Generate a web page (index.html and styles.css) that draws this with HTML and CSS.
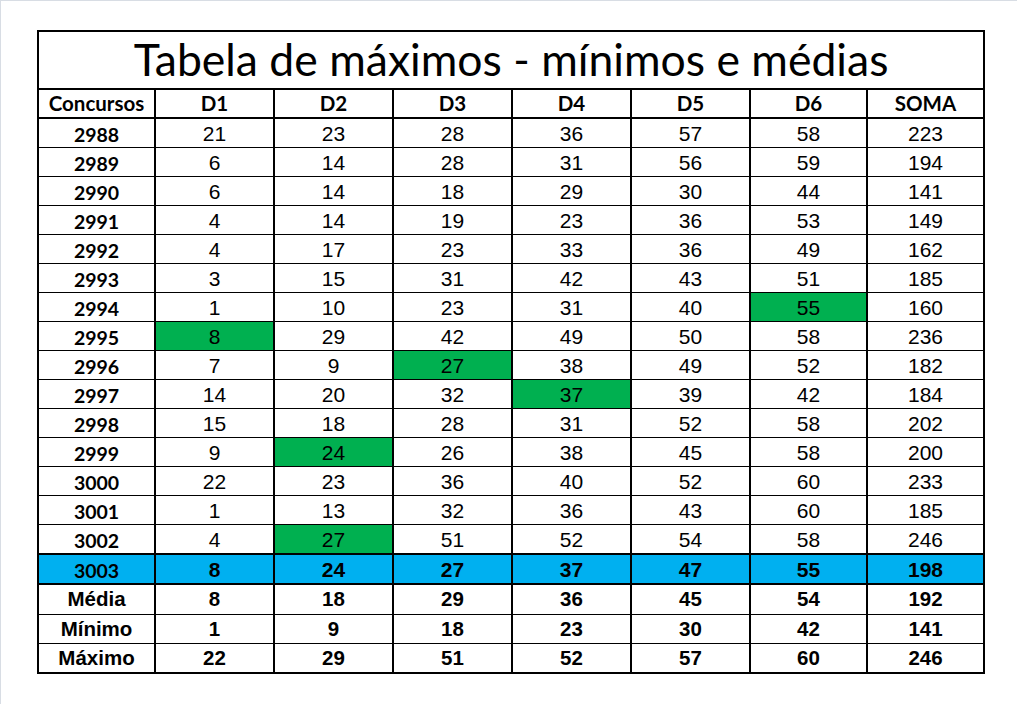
FILE: index.html
```html
<!DOCTYPE html>
<html lang="pt">
<head>
<meta charset="utf-8">
<title>Tabela de máximos - mínimos e médias</title>
<link rel="stylesheet" href="styles.css">
</head>
<body>
<div class="page">
<table class="sheet">
  <colgroup>
    <col class="c-lab"><col class="c-d"><col class="c-d"><col class="c-d"><col class="c-d"><col class="c-d"><col class="c-n"><col class="c-n">
  </colgroup>
  <thead>
    <tr class="title-row"><th colspan="8" class="title">Tabela de máximos - mínimos e médias</th></tr>
    <tr class="head-row"><th>Concursos</th><th>D1</th><th>D2</th><th>D3</th><th>D4</th><th>D5</th><th>D6</th><th>SOMA</th></tr>
  </thead>
  <tbody>
    <tr><th>2988</th><td>21</td><td>23</td><td>28</td><td>36</td><td>57</td><td>58</td><td>223</td></tr>
    <tr><th>2989</th><td>6</td><td>14</td><td>28</td><td>31</td><td>56</td><td>59</td><td>194</td></tr>
    <tr><th>2990</th><td>6</td><td>14</td><td>18</td><td>29</td><td>30</td><td>44</td><td>141</td></tr>
    <tr><th>2991</th><td>4</td><td>14</td><td>19</td><td>23</td><td>36</td><td>53</td><td>149</td></tr>
    <tr><th>2992</th><td>4</td><td>17</td><td>23</td><td>33</td><td>36</td><td>49</td><td>162</td></tr>
    <tr><th>2993</th><td>3</td><td>15</td><td>31</td><td>42</td><td>43</td><td>51</td><td>185</td></tr>
    <tr><th>2994</th><td>1</td><td>10</td><td>23</td><td>31</td><td>40</td><td class="hit">55</td><td>160</td></tr>
    <tr><th>2995</th><td class="hit">8</td><td>29</td><td>42</td><td>49</td><td>50</td><td>58</td><td>236</td></tr>
    <tr><th>2996</th><td>7</td><td>9</td><td class="hit">27</td><td>38</td><td>49</td><td>52</td><td>182</td></tr>
    <tr><th>2997</th><td>14</td><td>20</td><td>32</td><td class="hit">37</td><td>39</td><td>42</td><td>184</td></tr>
    <tr><th>2998</th><td>15</td><td>18</td><td>28</td><td>31</td><td>52</td><td>58</td><td>202</td></tr>
    <tr><th>2999</th><td>9</td><td class="hit">24</td><td>26</td><td>38</td><td>45</td><td>58</td><td>200</td></tr>
    <tr><th>3000</th><td>22</td><td>23</td><td>36</td><td>40</td><td>52</td><td>60</td><td>233</td></tr>
    <tr><th>3001</th><td>1</td><td>13</td><td>32</td><td>36</td><td>43</td><td>60</td><td>185</td></tr>
    <tr><th>3002</th><td>4</td><td class="hit">27</td><td>51</td><td>52</td><td>54</td><td>58</td><td>246</td></tr>
    <tr class="current"><th>3003</th><td>8</td><td>24</td><td>27</td><td>37</td><td>47</td><td>55</td><td>198</td></tr>
  </tbody>
  <tfoot>
    <tr><th>Média</th><td>8</td><td>18</td><td>29</td><td>36</td><td>45</td><td>54</td><td>192</td></tr>
    <tr><th>Mínimo</th><td>1</td><td>9</td><td>18</td><td>23</td><td>30</td><td>42</td><td>141</td></tr>
    <tr><th>Máximo</th><td>22</td><td>29</td><td>51</td><td>52</td><td>57</td><td>60</td><td>246</td></tr>
  </tfoot>
</table>
</div>
</body>
</html>
```

FILE: styles.css
```css
html, body {
  margin: 0;
  padding: 0;
  background: #ffffff;
}

.page {
  width: 1017px;
  height: 704px;
  box-sizing: border-box;
  border-top: 1px solid #d8dde4;
  border-left: 1px solid #d8dde4;
  padding: 29px 0 0 36px;
}

.sheet {
  border-collapse: collapse;
  table-layout: fixed;
  width: 946px;
  border: 2px solid #000;
  color: #000;
}

.c-lab { width: 117px; }
.c-d { width: 119px; }
.c-n { width: 117px; }

.sheet th,
.sheet td {
  border-left: 2px solid #000;
  border-right: 2px solid #000;
  border-top: 1px solid #000;
  border-bottom: 1px solid #000;
  padding: 0;
  text-align: center;
  vertical-align: middle;
  height: 28px;
  line-height: 1;
}

.sheet td {
  font-family: "Liberation Sans", Arial, sans-serif;
  font-size: 21px;
  font-weight: normal;
}

.sheet tbody th {
  font-family: Lato, "Noto Sans", sans-serif;
  font-weight: bold;
  font-size: 19.5px;
  padding-top: 3px;
  box-sizing: border-box;
}

.head-row th {
  font-family: Lato, "Noto Sans", sans-serif;
  font-weight: bold;
  font-size: 20.5px;
  height: 27px;
  border-bottom: 2px solid #000;
}

.title-row .title {
  height: 54px;
  border-bottom: 2px solid #000;
  font-family: Lato, "Noto Sans", sans-serif;
  font-weight: normal;
  font-size: 44.5px;
  padding-bottom: 2px;
}

.hit {
  background: #00b050;
}

.current th,
.current td {
  background: #00b0f0;
  height: 28px;
  border-top: 2px solid #000;
  border-bottom: 2px solid #000;
}

.current td {
  font-weight: bold;
}

.sheet tfoot th,
.sheet tfoot td {
  font-family: "Liberation Sans", Arial, sans-serif;
  font-weight: bold;
  font-size: 20.5px;
}

.sheet tfoot tr:first-child th,
.sheet tfoot tr:first-child td {
  height: 29px;
}
```
